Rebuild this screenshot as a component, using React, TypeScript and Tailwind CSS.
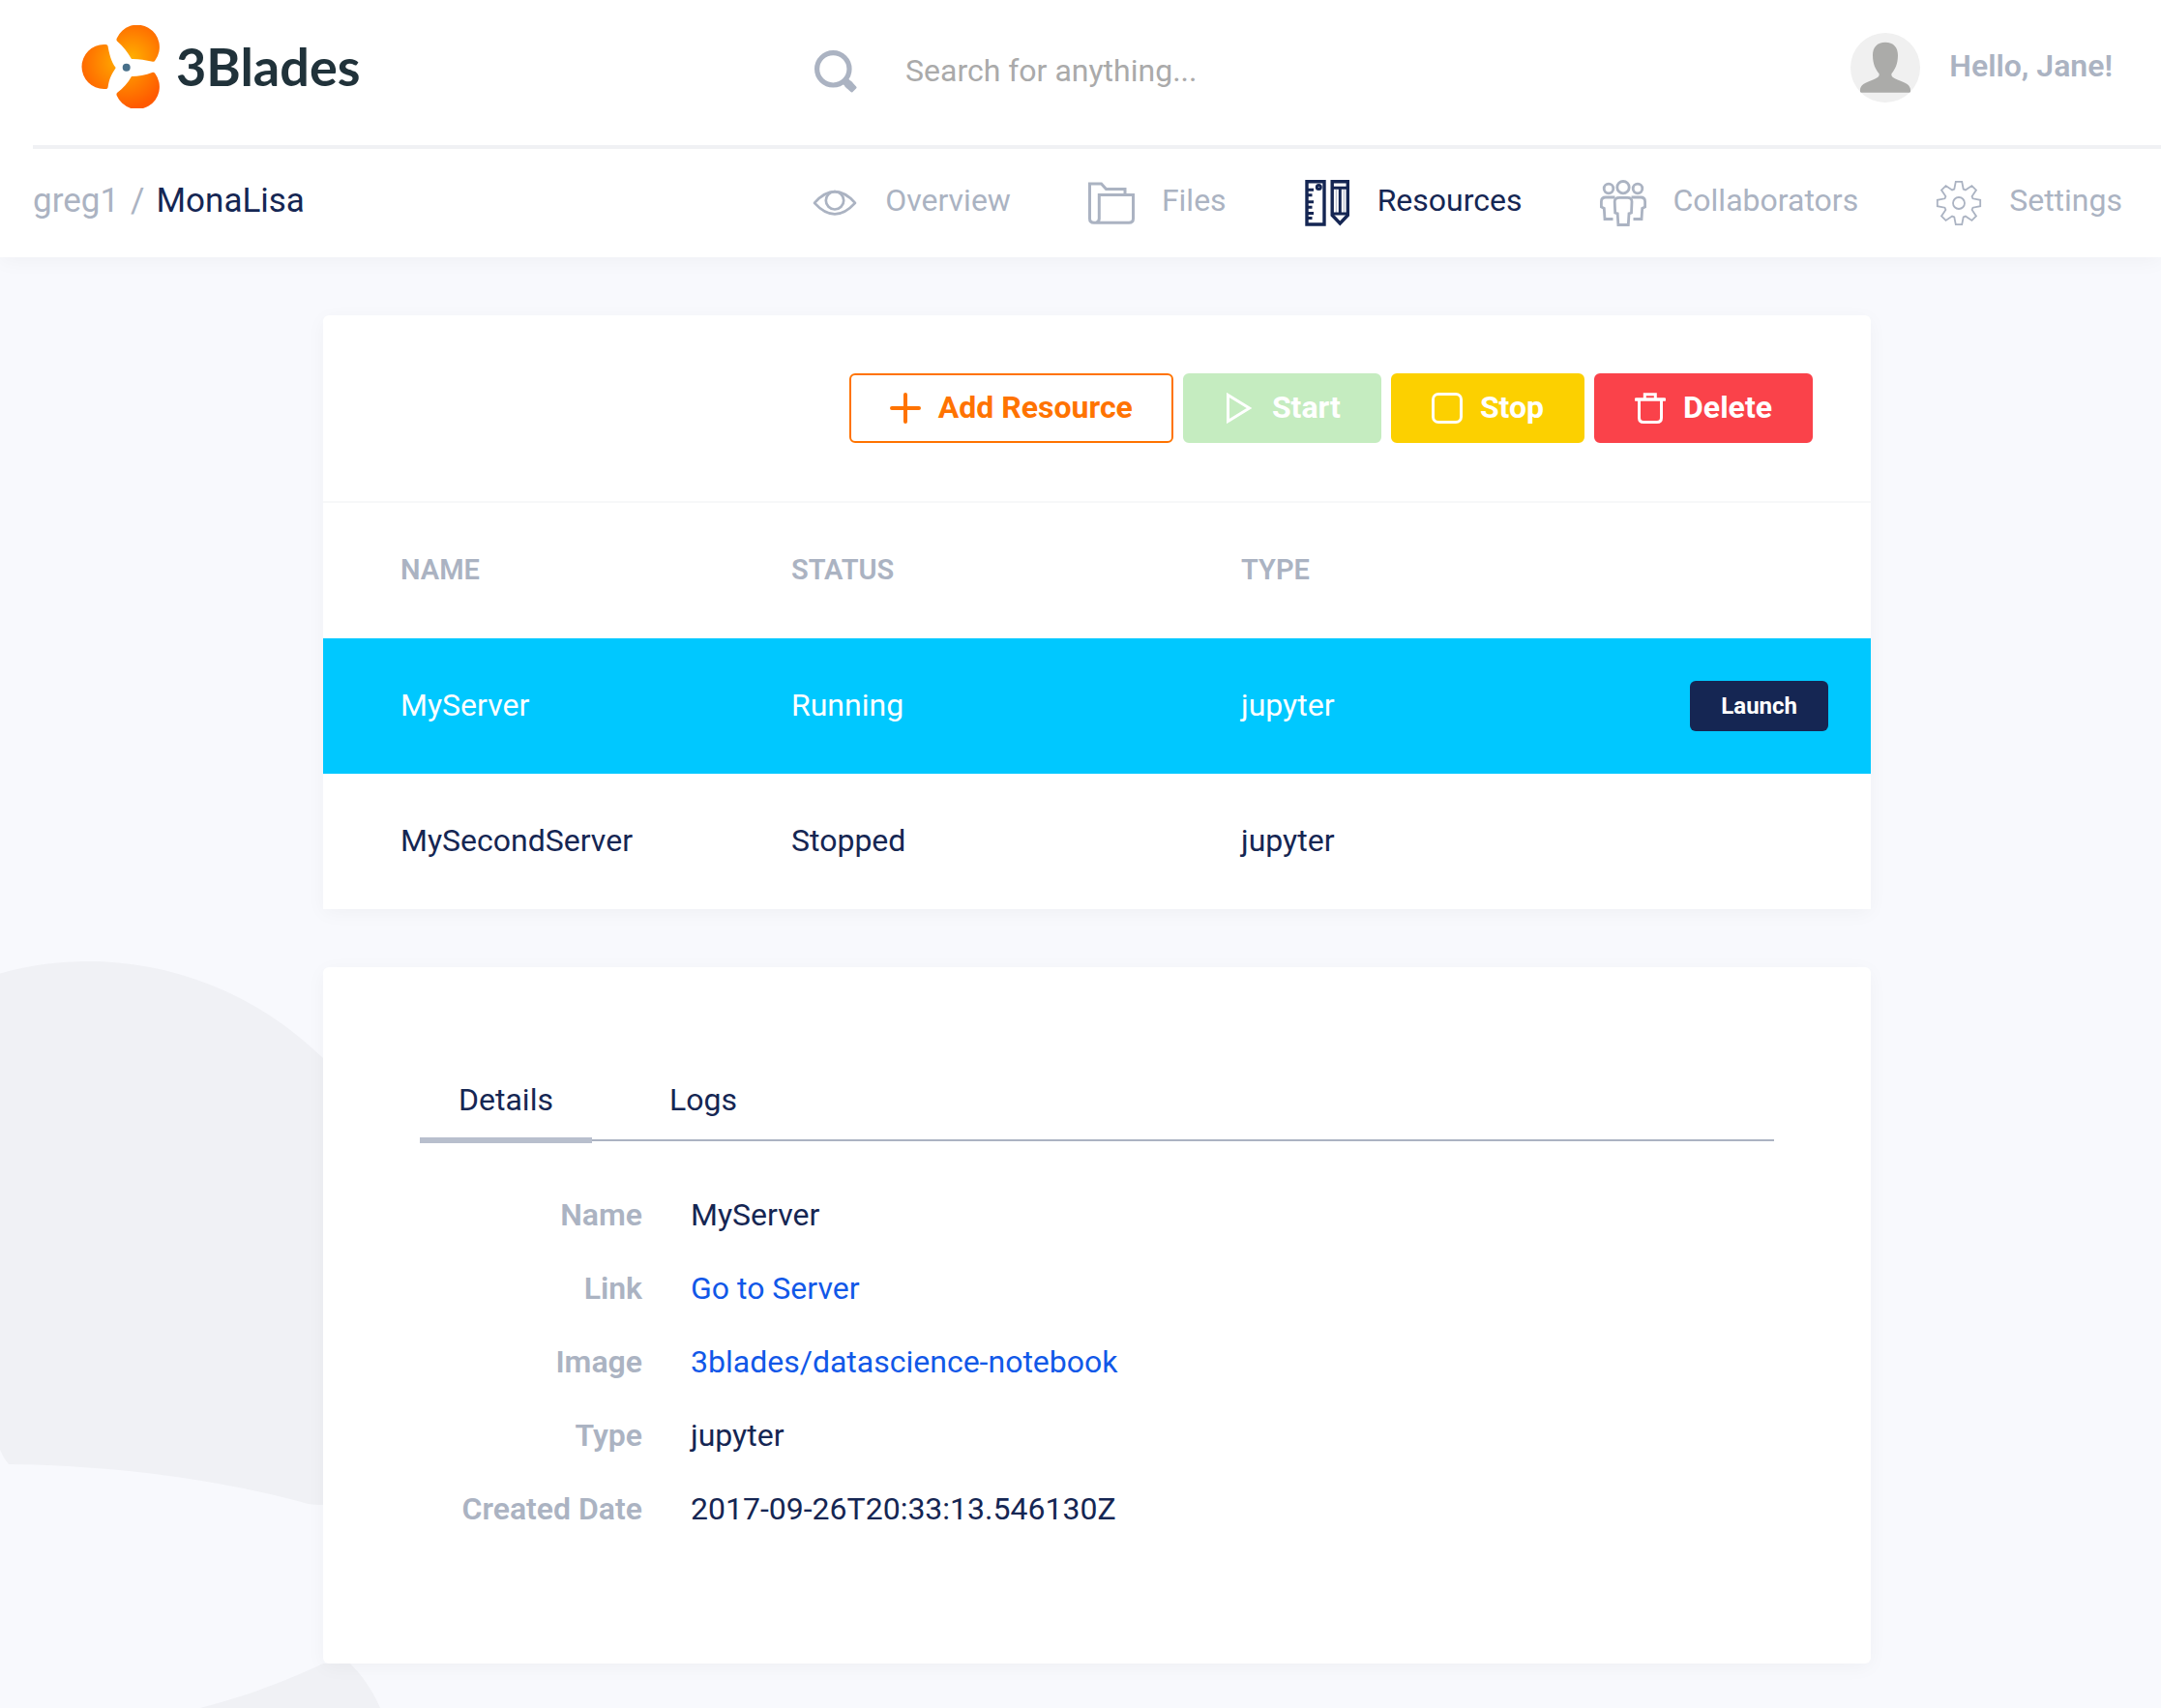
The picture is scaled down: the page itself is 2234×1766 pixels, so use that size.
import type { ReactNode } from 'react';

function Logo() {
  return (
    <svg viewBox="0 0 82 86" className="h-[86px] w-[82px] shrink-0" aria-hidden="true">
      <defs>
        <radialGradient id="bladeLeft" gradientUnits="userSpaceOnUse" cx="38" cy="38" r="42">
          <stop offset="0" stopColor="#ffaa00" />
          <stop offset="1" stopColor="#ff6200" />
        </radialGradient>
        <radialGradient id="bladeTop" gradientUnits="userSpaceOnUse" cx="52" cy="34" r="40">
          <stop offset="0" stopColor="#ffaf00" />
          <stop offset="1" stopColor="#ff6600" />
        </radialGradient>
        <radialGradient id="bladeBottom" gradientUnits="userSpaceOnUse" cx="46" cy="44" r="42">
          <stop offset="0" stopColor="#ffa000" />
          <stop offset="1" stopColor="#ff5a00" />
        </radialGradient>
      </defs>
      <path fill="url(#bladeLeft)" d="M23.5 20A23 23 0 1 0 23.5 66H25.5Q27 66 27.5 64.5C29 55 31 51.5 35.7 44C31 38 29 30 27.5 21.5Q27 20 25.5 20Z" />
      <path fill="url(#bladeTop)" d="M36.800 13.500A23 23 0 1 1 76.500 36.200Q75.700 38 74 37.800C66 36 59 34.800 52 35C48 28 43.500 22 37 16.500Q36 15.500 36.800 13.500Z" />
      <path fill="url(#bladeBottom)" d="M36.800 73A23 23 0 1 0 76.500 50.300Q75.700 48.500 74 48.800C66 52 59 53 52 53C48 60 43.500 65 37 70Q36 71 36.800 73Z" />
      <circle cx="46.700" cy="43.700" r="4" fill="#48708a" />
    </svg>
  );
}

function SearchIcon() {
  return (
    <svg viewBox="0 0 44 44" className="size-11 shrink-0" fill="none" stroke="currentColor" aria-hidden="true">
      <circle cx="19.300" cy="19.300" r="16.700" strokeWidth="5.200" />
      <path d="M30.500 30.500L37 37" strokeWidth="8" />
      <path d="M33 37L38.500 42L42 38.500L37 33Z" fill="currentColor" strokeWidth="3" strokeLinejoin="round" />
    </svg>
  );
}

function Avatar() {
  return (
    <svg viewBox="0 0 72 72" className="size-[72px] rounded-full bg-[#f0f0f0]" role="img" aria-label="Jane">
      <path
        fill="#ababa9"
        d="M36 9.700C27.500 9.700 23 15 23 23C23 32 26 38 29.500 42C30.500 45.500 27 47 22 49C15 51.500 10 54 10 59V61.700H62V59C62 54 57 51.500 50 49C45 47 41.500 45.500 42.500 42C46 38 49 32 49 23C49 15 44.500 9.700 36 9.700Z"
      />
    </svg>
  );
}

function NavIcon({ children, width }: { children: ReactNode; width: number }) {
  return (
    <svg viewBox="0 0 48 48" className="size-12 shrink-0" fill="none" stroke="currentColor" strokeWidth={width} aria-hidden="true">
      {children}
    </svg>
  );
}

const EyeIcon = () => (
  <NavIcon width={2.7}>
    <path d="M3 23.800C10 16 17 12.200 24 12.200S38 16 45 23.800C38 31.500 31 35.300 24 35.300S10 31.500 3 23.800Z" strokeLinejoin="round" />
    <circle cx="24" cy="21.300" r="9.200" />
  </NavIcon>
);

const FolderIcon = () => (
  <NavIcon width={3}>
    <path d="M38 16V9.500H18.500L13.500 4H1.500V40Q1.500 44.300 6 44.300H42Q46.500 44.300 46.500 40V15.500H11.300V40Q11.300 43.500 8 44.300" />
  </NavIcon>
);

const RulerPencilIcon = () => (
  <NavIcon width={3.4}>
    <path d="M3 1.800H21V46H3Z" />
    <path d="M3 10.300H10M3 22.700H10M3 34.500H10" strokeWidth="3" />
    <path d="M3 15.800H8.500M3 28.200H8.500M3 39.500H8.500" strokeWidth="3" />
    <circle cx="15.300" cy="7.500" r="2" strokeWidth="3" />
    <path d="M29.200 1.800H45.300V36.500L37.300 45L29.200 36.500Z" />
    <path d="M29 8.300H45.500M29 35H45.500M37.300 8V35" strokeWidth="3" />
    <path d="M33.300 10V34M41.300 10V34" strokeWidth="0.700" opacity="0.5" />
  </NavIcon>
);

const PeopleIcon = () => (
  <NavIcon width={2.8}>
    <circle cx="24" cy="7.700" r="6.200" />
    <circle cx="9" cy="9" r="4.800" />
    <circle cx="39" cy="9" r="4.800" />
    <path d="M20 18.300H28.500Q33 18.300 33 22.500L32.500 34L30 34.800L29.300 46.500H18.900L18.200 34.800L15.700 34L15.200 22.500Q15.200 18.300 20 18.300Z" />
    <path d="M15.500 18H6Q1.400 18 1.400 22.500V28L4.300 29.500L5 40.500H13.500" />
    <path d="M32.500 18H42Q46.600 18 46.600 22.500V28L43.700 29.500L43 40.500H34.500" />
  </NavIcon>
);

const gearPoints = Array.from({ length: 8 }, (_, i) => {
  const a = (i * Math.PI) / 4;
  return [[-4.700, -14.500], [-3.200, -22.200], [3.200, -22.200], [4.700, -14.500]]
    .map(([x, y]) => `${24 + x * Math.cos(a) - y * Math.sin(a)},${24 + x * Math.sin(a) + y * Math.cos(a)}`)
    .join(' ');
}).join(' ');

const GearIcon = () => (
  <NavIcon width={1.8}>
    <polygon points={gearPoints} />
    <circle cx="24" cy="24" r="6" />
  </NavIcon>
);

function ButtonIcon({ children }: { children: ReactNode }) {
  return (
    <svg viewBox="0 0 32 32" className="size-8" fill="none" stroke="currentColor" strokeWidth="3" aria-hidden="true">
      {children}
    </svg>
  );
}

const navItems = [
  { label: 'Overview', icon: <EyeIcon /> },
  { label: 'Files', icon: <FolderIcon /> },
  { label: 'Resources', icon: <RulerPencilIcon />, active: true },
  { label: 'Collaborators', icon: <PeopleIcon /> },
  { label: 'Settings', icon: <GearIcon /> },
];

const actions = [
  {
    label: 'Add Resource',
    style: 'border-[#ff7300] bg-white text-[#ff7300]',
    icon: <path d="M2 16H30M16 2V30" strokeWidth="4" strokeLinecap="round" />,
  },
  {
    label: 'Start',
    style: 'border-[#c5ecc0] bg-[#c5ecc0] text-white',
    icon: <path d="M4.500 2.500V29.500L26.500 16Z" />,
  },
  {
    label: 'Stop',
    style: 'border-[#fcd000] bg-[#fcd000] text-white',
    icon: <rect x="1.500" y="1.500" width="29" height="29" rx="5.500" />,
  },
  {
    label: 'Delete',
    style: 'border-[#fa424a] bg-[#fa424a] text-white',
    icon: (
      <>
        <path d="M1.500 7H30.500" strokeWidth="3.600" strokeLinecap="round" />
        <path d="M10.300 6V1.700H21.300V6" />
        <path d="M4.500 8V26Q4.500 30.500 9 30.500H23Q27.500 30.500 27.500 26V8" />
      </>
    ),
  },
];

const servers = [
  { name: 'MyServer', status: 'Running', type: 'jupyter', selected: true },
  { name: 'MySecondServer', status: 'Stopped', type: 'jupyter', selected: false },
];

const details = [
  { label: 'Name', value: 'MyServer' },
  { label: 'Link', value: 'Go to Server', link: true },
  { label: 'Image', value: '3blades/datascience-notebook', link: true },
  { label: 'Type', value: 'jupyter' },
  { label: 'Created Date', value: '2017-09-26T20:33:13.546130Z' },
];

export default function App() {
  return (
    <div className="relative isolate min-h-screen overflow-hidden bg-[#f8f9fd] font-['Roboto',sans-serif] text-[32px] leading-10 text-[#152653]">
      <svg viewBox="0 0 400 772" className="absolute top-[994px] left-0 -z-10 h-[772px] w-[400px]" fill="#f0f1f5" aria-hidden="true">
        <path d="M0 12.500C30 4 60 0 92 0C170 0 260 28 334 100L400 170V562H334Q322 562 315 560C220 534 110 521 9 520Q3 513 0 505Z" />
        <path d="M207 772C255 760 295 744 334 726H362C374 738 385 753 393 772Z" />
      </svg>

      <header className="bg-white pl-[34px] shadow-[0_4px_20px_rgba(0,0,0,0.04)]">
        <div className="flex h-[154px] items-center border-b-4 border-[#f0f1f4] pr-[50px] pl-[50px]">
          <a href="#" className="flex w-[758px] shrink-0 items-center gap-4 pb-3 font-['Lato',sans-serif] text-[54px] leading-none font-bold text-[#20323a]">
            <Logo />
            3Blades
          </a>
          <label className="flex flex-1 items-center gap-[50px] pb-0.5 text-[#abb3c2]">
            <SearchIcon />
            <input
              type="search"
              aria-label="Search"
              placeholder="Search for anything..."
              className="mb-0.5 h-12 w-full min-w-0 bg-transparent text-[#152653] outline-none placeholder:text-[#aaaaaa]"
            />
          </label>
          <div className="flex shrink-0 items-center gap-[30px] pb-2.5 font-semibold text-[#abb3c2]">
            <Avatar />
            <span className="pb-1">Hello, Jane!</span>
          </div>
        </div>
        <div className="flex h-28 items-center justify-between pr-10">
          <div className="flex gap-3 pb-1 text-[35px]">
            <a href="#" className="text-[#abb3c2]">greg1</a>
            <span className="text-[#abb3c2]">/</span>
            <a href="#">MonaLisa</a>
          </div>
          <nav className="flex gap-20">
            {navItems.map((item) => (
              <a
                key={item.label}
                href="#"
                className={item.active ? 'flex items-center gap-7' : 'flex items-center gap-7 text-[#abb3c2]'}
              >
                {item.icon}
                <span className="pb-1.5">{item.label}</span>
              </a>
            ))}
          </nav>
        </div>
      </header>

      <main className="pt-[60px] pb-[46px] pl-[34px]">
        <section className="mx-auto max-w-[1600px] rounded-t-md bg-white shadow-[0_4px_20px_rgba(0,0,0,0.04)]">
          <div className="flex justify-end gap-2.5 border-b-2 border-[#f7f8f9] p-[60px]">
            {actions.map((action) => (
              <button
                key={action.label}
                type="button"
                className={`flex h-[72px] items-center gap-[18px] rounded-md border-2 px-10 font-bold ${action.style}`}
              >
                <ButtonIcon>{action.icon}</ButtonIcon>
                <span className="pb-0.5">{action.label}</span>
              </button>
            ))}
          </div>
          <table className="w-full table-fixed text-left">
            <thead>
              <tr className="h-[140px] text-[29px] text-[#abb3c2]">
                <th className="w-[484px] pb-0.5 pl-20 font-semibold">NAME</th>
                <th className="w-[465px] pb-0.5 font-semibold">STATUS</th>
                <th className="pb-0.5 font-semibold">TYPE</th>
                <th aria-label="Actions" />
              </tr>
            </thead>
            <tbody>
              {servers.map((server) => (
                <tr key={server.name} className={server.selected ? 'h-[140px] bg-[#00c8ff] text-white' : 'h-[140px]'}>
                  <td className="pb-0.5 pl-20">{server.name}</td>
                  <td className="pb-0.5">{server.status}</td>
                  <td className="pb-0.5">{server.type}</td>
                  <td className="pr-11">
                    {server.selected && (
                      <button type="button" className="ml-auto block h-[52px] rounded-md bg-[#152653] px-8 text-2xl font-bold text-white">
                        Launch
                      </button>
                    )}
                  </td>
                </tr>
              ))}
            </tbody>
          </table>
        </section>

        <section className="mx-auto mt-[60px] max-w-[1600px] rounded-md bg-white px-[100px] pt-[100px] pb-[140px] shadow-[0_4px_20px_rgba(0,0,0,0.04)]">
          <div role="tablist" className="flex gap-10 border-b-2 border-[#abb3c2]">
            <button type="button" role="tab" aria-selected="true" className="-mb-1 h-[82px] border-b-6 border-[#b8bfcd] px-10 pb-0.5">
              Details
            </button>
            <button type="button" role="tab" aria-selected="false" className="h-[78px] px-10 pb-1">
              Logs
            </button>
          </div>
          <dl className="mt-14 flex flex-col gap-9">
            {details.map((row) => (
              <div key={row.label} className="flex gap-[50px]">
                <dt className="w-[230px] text-right font-semibold text-[#abb3c2]">{row.label}</dt>
                <dd>
                  {row.link ? <a href="#" className="text-[#1158e8]">{row.value}</a> : row.value}
                </dd>
              </div>
            ))}
          </dl>
        </section>
      </main>
    </div>
  );
}
